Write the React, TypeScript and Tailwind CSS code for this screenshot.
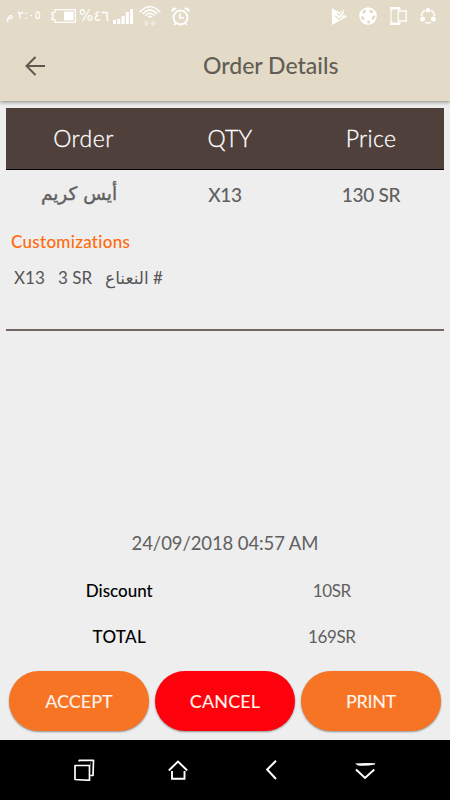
function StatusBar() {
    return (
        <div dir="ltr" className="flex h-8 items-center justify-between pl-[9px] pr-[14px] text-white">
            <div className="flex h-8 items-center">
                <span dir="rtl" className="flex w-[32px] justify-start whitespace-nowrap pb-[2px] font-['DejaVu_Sans','Liberation_Sans',sans-serif] text-[12px] leading-none tracking-[-0.8px]">٢:٠٥ م</span>
                <svg className="ml-[10px] h-[14px] w-[25px]" viewBox="0 0 25 14" fill="none" stroke="currentColor">
                    <path d="M24.3 .7H4v2.800H1v2.200h1.200v2.800H1v2.200h3v2.600h20.300Z" strokeWidth="1.200" />
                    <path d="M13 2.500h9.500v9h-9.500z" fill="currentColor" stroke="none" />
                </svg>
                <span dir="ltr" className="ml-[3px] w-[28px] whitespace-nowrap font-['DejaVu_Sans',sans-serif] text-[15px] leading-none tracking-[-1.3px]">%&#x200e;٤٦</span>
                <svg className="ml-[6px] h-4 w-5" viewBox="0 0 20 16" fill="currentColor">
                    <path d="M0 12h3v4H0zM4.300 11h3v5h-3zM8.600 8h3v8h-3zM12.800 4h3v12h-3zM17 1h3v15h-3z" />
                </svg>
                <svg className="ml-[6px] h-[21px] w-[22px]" viewBox="0 0 22 21" fill="none" stroke="currentColor">
                    <path d="M.7 6.200Q11-4.500 21.300 6.200M3.800 8Q11 .2 18.200 8M6.500 9.700Q11 5 15.500 9.700M9 11.200Q11 9.500 13 11.200" strokeWidth="1.500" />
                    <path d="m7.300 14 3.300 3.500H8.800V20H5.800v-2.500H4zm7 6.500L11 17h1.800v-2.500h3V17h1.800z" fill="currentColor" stroke="none" opacity=".4" />
                </svg>
                <svg className="ml-[10px] h-[19px] w-[19px]" viewBox="0 0 19 19" fill="none" stroke="currentColor">
                    <circle cx="9.500" cy="10.500" r="7" strokeWidth="1.900" />
                    <path d="M9 6v5h4" strokeWidth="1.600" />
                    <path d="m3 18 1.800-2m11.200 2-1.800-2" strokeWidth="1.700" />
                    <path d="M.8 5.200 6 1.200Q3-.5 1.200 1.700-.3 3.300.8 5.200Zm17.400 0L13 1.200q3-1.700 4.800.5 1.500 1.600.4 3.500Z" fill="currentColor" stroke="none" />
                </svg>
            </div>
            <div className="flex items-center">
                <svg className="h-[17px] w-4" viewBox="0 0 16 17" fill="none">
                    <path d="M.8.300 8 4 13 1.500 12.500 6.500 16 8.500 1 17Z" fill="currentColor" />
                    <path d="m5.800 5 2.600 2.300L11.800 2.500M4.300 8l4.200 3.500L13.500 5" stroke="#e3dbc8" strokeWidth="1.100" />
                </svg>
                <svg className="ml-3 h-[18px] w-[18px]" viewBox="0 0 18 18">
                    <circle cx="9" cy="9" r="8.800" fill="#ffffff" />
                    <g fill="#e3dbc8">
                        <path d="M4.200 3.200 6.300 2.500 7.200 4.800 4.600 7 3.200 6.200Z" />
                        <path d="M11.500 2.600 14.200 4 14 6.200 11.700 6 10 4.600Z" />
                        <path d="M15 8.500 16.500 8.200 16 11 13.800 13 12.500 12.500 13 9.700Z" />
                        <path d="M8 14 10.800 13.600 11.300 15.800 8.700 16.700Z" />
                        <path d="M2.200 9.300 4.600 9.500 5.700 12.300 4.600 13.300 2.300 12Z" />
                    </g>
                </svg>
                <svg className="ml-[13px] h-[18px] w-[17px]" viewBox="0 0 17 18" fill="none" stroke="currentColor">
                    <path d="M9.700 3V.7H1v16.600h8.700V15" strokeWidth="1.200" />
                    <path d="M.5 0h9.700v2.500H.5zM.5 15.500h9.700V18H.5z" fill="currentColor" stroke="none" />
                    <path d="M8.200 4h8v10h-8z" strokeWidth="1.300" />
                </svg>
                <svg className="ml-[13px] h-4 w-4" viewBox="0 0 16 16" fill="none" stroke="currentColor">
                    <path d="M5 2.500A6 6 0 0 0 1.500 8M11 2.500A6 6 0 0 1 14.500 8M5 14.300a7 7 0 0 0 6 0" strokeWidth="1.400" />
                    <g fill="currentColor" stroke="none">
                        <circle cx="8" cy="2.300" r="2.300" />
                        <circle cx="2.600" cy="11" r="2.500" />
                        <circle cx="13.400" cy="11" r="2.500" />
                    </g>
                </svg>
            </div>
        </div>
    );
}

function Header() {
    return (
        <header className="relative h-[101px] bg-[#e3dbc8] shadow-[0_1px_4px_rgba(0,0,0,0.45)]">
            <StatusBar />
            <div className="flex h-[69px] items-center pl-[25px]">
                <svg className="mb-px h-5 w-5" viewBox="0 0 20 20" fill="none" stroke="#5f584f" strokeWidth="2">
                    <path d="M20 10H2M10.500 1 1.500 10l9 9" />
                </svg>
                <h1 className="ml-[158px] whitespace-nowrap pb-0.5 text-[23px] leading-none font-medium text-[#625d55]">Order Details</h1>
            </div>
        </header>
    );
}

function Actions() {
    return (
        <div className="grid h-[60px] grid-cols-3 gap-[6px] px-[9px] text-[18px] text-[#fff0e8]">
            <button className="rounded-full bg-[#f77424] shadow-[0_1px_2px_rgba(0,0,0,0.4)]">
                <span className="font-medium">ACCEPT</span>
            </button>
            <button className="rounded-full bg-[#ff000d] shadow-[0_1px_2px_rgba(0,0,0,0.4)]">
                <span className="font-medium tracking-[0.1px]">CANCEL</span>
            </button>
            <button className="rounded-full bg-[#f77424] shadow-[0_1px_2px_rgba(0,0,0,0.4)]">
                <span className="font-medium tracking-[-0.4px]">PRINT</span>
            </button>
        </div>
    );
}

function NavBar() {
    return (
        <nav className="grid h-[60px] grid-cols-4 items-center justify-items-center bg-black px-[37px] text-white">
            <svg className="h-[22px] w-[22px]" viewBox="0 0 22 22" fill="none" stroke="currentColor" strokeLinejoin="round">
                <path d="M2 6.500h14.500v14.800L2 20.500zM6 2.500 6.300 1.300h14.200L20 16.500h-2.500" strokeWidth="1.700" />
                <path d="M17.500 3.500v3" strokeWidth=".7" opacity=".6" />
            </svg>
            <svg className="h-5 w-5" viewBox="0 0 20 20" fill="none" stroke="currentColor" strokeWidth="1.900">
                <path d="m.8 10.500 9.200-9 9.200 9M4 11v7.800h12.500V11" />
            </svg>
            <svg className="mr-[1px] h-5 w-[11px]" viewBox="0 0 11 20" fill="none" stroke="currentColor" strokeWidth="2">
                <path d="M10 .8 1.200 9.500 10 19" />
            </svg>
            <svg className="mr-[2px] h-5 w-5" viewBox="0 0 20 20" fill="none" stroke="currentColor" strokeWidth="2">
                <path d="m1 9.500 9 8.500 9.300-8.500" />
                <path d="M0 3.500Q10 2.800 20 3.300V4.500Q10 6.500 3 5.500Z" fill="currentColor" stroke="none" />
            </svg>
        </nav>
    );
}

export default function App() {
    return (
        <div className="flex h-[800px] w-[450px] flex-col overflow-hidden bg-[#eeeeee] font-['Lato','Noto_Sans','DejaVu_Sans',sans-serif] [font-variant-ligatures:none]">
            <Header />

            <main className="flex flex-1 flex-col pt-[7px]">
                {/* Order items */}
                <section className="mx-[6px] flex h-[223px] flex-col border-b-2 border-[#706763]">
                    <div className="grid h-[62px] grid-cols-3 items-center border-b border-black bg-[#50403b] text-center text-[23px] leading-none text-white [-webkit-text-stroke:0.3px_white]">
                        <span className="pl-[9px] font-light tracking-[0.5px]">Order</span>
                        <span className="pl-2.5 font-light tracking-[0.2px]">QTY</span>
                        <span className="font-light tracking-[0.3px]">Price</span>
                    </div>
                    <div className="grid h-[50px] grid-cols-3 items-center pb-0.5 text-center text-[19px] leading-none font-medium text-[#606060]">
                        <span dir="rtl" className="font-['DejaVu_Sans',sans-serif] text-[18.500px] [-webkit-text-stroke:0.4px_#606060]">أيس كريم</span>
                        <span className="tracking-[-0.3px]">X13</span>
                        <span className="tracking-[-0.3px]">130 SR</span>
                    </div>
                    <h2 className="flex h-11 items-center pb-0.5 pl-[5px] text-[17px] leading-none font-medium tracking-[0.300px] text-[#ff6a0c]">Customizations</h2>
                    <div className="flex h-7 items-center pb-0.5 pl-2 text-[17px] leading-none text-[#555555]">
                        <span className="w-11">X13</span>
                        <span className="w-[47px]">3 SR</span>
                        <span dir="rtl" className="whitespace-nowrap font-['Lato','DejaVu_Sans',sans-serif]"># النعناع</span>
                    </div>
                </section>

                {/* Totals */}
                <section className="mt-auto">
                    <p className="flex h-[46px] items-center justify-center pb-[2px] text-[18.500px] leading-none tracking-[-0.1px] text-[#606060]">24/09/2018 04:57 AM</p>
                    <div className="grid grid-cols-2 pr-[12px] pl-[13px] text-center leading-none">
                        <span className="flex h-[46px] items-center justify-center text-[17px] font-medium text-black">Discount</span>
                        <span className="flex h-[46px] items-center justify-center text-[17px] tracking-[-0.4px] text-[#606060]">10SR</span>
                        <span className="flex h-[46px] items-center justify-center text-[17px] font-medium tracking-[0.3px] text-black">TOTAL</span>
                        <span className="flex h-[46px] items-center justify-center text-[17px] tracking-[-0.4px] text-[#606060]">169SR</span>
                    </div>
                </section>

                <div className="mt-3 mb-[9px]">
                    <Actions />
                </div>
            </main>

            <NavBar />
        </div>
    );
}
